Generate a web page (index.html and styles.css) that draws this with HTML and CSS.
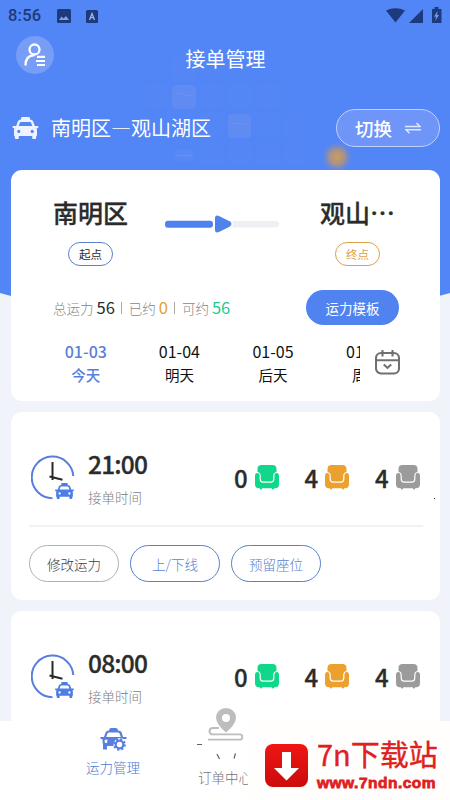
FILE: index.html
```html
<!DOCTYPE html>
<html lang="zh-CN">
<head>
<meta charset="utf-8">
<meta name="viewport" content="width=device-width, initial-scale=1">
<title>接单管理</title>
<link rel="stylesheet" href="styles.css">
</head>
<body>
<svg width="0" height="0" class="defs" aria-hidden="true">
  <symbol id="taxi" viewBox="0 0 26 22">
    <path fill-rule="evenodd" d="M8.500 2.600V1.200Q8.500 0 10 0h6q1.500 0 1.500 1.200v1.400q2.500.3 3.200 1.800L22.300 9H25q1 0 1 1t-1 1.200h-1l.5 1.800v5.500l-.8.7v1.800q0 1-1 1h-2q-1 0-1-1V19H6.300v2q0 1-1 1h-2q-1 0-1-1v-1.800l-.8-.7V13l.5-1.800H1q-1 0-1-1.200t1-1h2.700l1.600-4.600q.7-1.500 3.200-1.800zM6.200 9h13.600l-1.300-3.500q-.2-.6-1-.6H8.500q-.8 0-1 .6zM6.300 12.800a1.600 1.600 0 1 0 0 3.200 1.600 1.600 0 0 0 0-3.200zm13.400 0a1.600 1.600 0 1 0 0 3.200 1.600 1.600 0 0 0 0-3.200z"/>
  </symbol>
  <symbol id="seat" viewBox="0 0 24 25">
    <path d="M2.500 7V4Q2.500 0 6.500 0h11q4 0 4 4v3q-3.300.6-3.300 4.200v2.800q0 2.500-2.400 2.500H8.200q-2.400 0-2.400-2.500v-2.800Q5.800 7.600 2.500 7z"/>
    <path d="M0 11q0-3 2.300-3t2.300 3v3q0 3.700 3.600 3.700h7.600q3.600 0 3.600-3.700v-3q0-3 2.300-3T24 11v8q0 4.300-4 4.300h-.7q-.3 1.200-1.300 1.200t-1.200-1.200H7.200Q7 24.500 6 24.500t-1.300-1.200H4q-4 0-4-4.300z"/>
  </symbol>
  <symbol id="clock" viewBox="0 0 44 45">
    <path d="M21.500 43.200A20.800 20.800 0 1 1 42.300 21" fill="none" stroke="#587fdc" stroke-width="2"/>
    <path d="M21.500 7v18M18.500 21.500 31.500 24.800" fill="none" stroke="#292929" stroke-width="2"/>
    <svg x="24" y="28" width="19" height="16"><use href="#taxi" fill="#4c7ee5"/></svg>
  </symbol>
</svg>

<div class="screen">
  <main class="content">
    <header class="hero">
      <svg class="hero-art" viewBox="0 0 450 298" aria-hidden="true">
        <defs>
          <radialGradient id="glow"><stop offset="0" stop-color="#cf9c5b"/><stop offset=".45" stop-color="#b59476" stop-opacity=".85"/><stop offset="1" stop-color="#5385f7" stop-opacity="0"/></radialGradient>
        </defs>
        <path d="M0 0H450V293L439 296H11L0 293Z" fill="#5285f6"/>
        <g fill="#5a8af6" opacity=".3">
          <rect x="144" y="84" width="24" height="24" rx="4"/><rect x="200" y="84" width="24" height="24" rx="4"/><rect x="228" y="84" width="24" height="24" rx="4"/><rect x="256" y="84" width="24" height="24" rx="4"/>
          <rect x="172" y="55" width="24" height="26" rx="4"/><rect x="200" y="112" width="24" height="25" rx="4"/><rect x="256" y="112" width="22" height="25" rx="4"/><rect x="284" y="114" width="22" height="25" rx="4"/>
          <rect x="200" y="142" width="24" height="23" rx="4"/><rect x="228" y="142" width="24" height="23" rx="4"/><rect x="256" y="142" width="24" height="23" rx="4"/><rect x="284" y="142" width="22" height="23" rx="4"/>
        </g>
        <g fill="#688ff1" opacity=".6"><rect x="172" y="85" width="24" height="24" rx="4"/><rect x="228" y="114" width="23" height="24" rx="4"/><rect x="174" y="149" width="20" height="12" rx="4" opacity=".5"/></g>
        <g fill="none" stroke="#8c9ede" opacity=".5"><path d="M177 94l5-1 5 3 6-1M233 124l5-1 9 2M177 156l6-1 9 1"/></g>
        <circle cx="337" cy="157" r="17" fill="url(#glow)"/>
      </svg>
      <div class="status">
        <span class="time">8:56</span>
        <svg class="st-pic" viewBox="0 0 14 14"><rect width="14" height="14" rx="1.500" fill="#1c3a7c"/><path d="M2 11l2.500-3.500 2 2L9 7l3 4z" fill="#7ea0ee"/></svg>
        <svg class="st-a" viewBox="0 0 12 13"><rect width="12" height="13" rx="1.500" fill="#1c3a7c"/><path d="M3.500 10 6 3.500 8.500 10M4.500 7.700h3" fill="none" stroke="#9ab6f4" stroke-width="1.300"/></svg>
        <svg class="st-right" viewBox="0 0 58 17" fill="#1c3a7c"><path d="M2 3.500Q11.500-1 21 3.500L11.500 15.500zM25 16 39 2v14zM48 2h2.500V0h4v2H57.500v14H48z"/><path d="M53.500 4 50 9.800h2l-.7 4 3.800-5.800h-2z" fill="#7197ec"/></svg>
      </div>
      <div class="navbar">
        <span class="avatar"><svg viewBox="0 0 22 24" fill="none" stroke="#fff"><circle cx="10.500" cy="6.500" r="5" stroke-width="2.300"/><path d="M1.500 22.500Q1.500 12.500 10.500 12" stroke-width="2.300"/><path d="M13 13.800h8M12 18h9M13 22h8" stroke-width="2.200"/></svg></span>
        <h1>接单管理</h1>
      </div>
      <div class="route-bar">
        <svg class="route-taxi" fill="#eef3ff"><use href="#taxi"/></svg>
        <span class="route-name">南明区—观山湖区</span>
        <button class="switch">切换<svg viewBox="0 0 16 12" fill="none" stroke="#dfe8ff" stroke-width="1.500"><path d="M0 4.500h15L11.500 1M16 7.800H1L4.500 11.300"/></svg></button>
      </div>
    </header>

    <section class="card summary">
      <div class="stops">
        <div class="stop from"><strong>南明区</strong><span class="tag">起点</span></div>
        <svg class="track" viewBox="0 0 114 20"><rect y="6.800" width="48" height="7" rx="3" fill="#5082ed"/><path d="M50 4.300Q50 .5 54 2l10.500 5.300q4 2.700 0 5.400L54 18q-4 1.500-4-2.300z" fill="#5082ed"/><path d="M67 7h44q3 0 3 3.200t-3 3.200H67q2-3.200 0-6.400z" fill="#eff0f4"/></svg>
        <div class="stop to"><strong>观山<i>⋯</i></strong><span class="tag">终点</span></div>
      </div>
      <div class="capacity">
        <p>总运力 <b>56</b><i></i>已约 <b class="orange">0</b><i></i>可约 <b class="green">56</b></p>
        <button class="template">运力模板</button>
      </div>
      <div class="dates">
        <div class="date-strip">
          <div class="date active"><span>01-03</span><span>今天</span></div>
          <div class="date"><span>01-04</span><span>明天</span></div>
          <div class="date"><span>01-05</span><span>后天</span></div>
          <div class="date"><span>01-06</span><span>周六</span></div>
        </div>
        <svg class="calendar" viewBox="0 0 25 25" fill="none" stroke="#707070" stroke-width="2.100"><rect x="1" y="3" width="23" height="20.500" rx="5"/><path d="M1.500 10.200h22M7.500 0v6.500M17.500 0v6.500M8.800 14.500l3.700 3.400 3.700-3.400"/></svg>
      </div>
    </section>

    <section class="card slot">
      <div class="slot-head">
        <svg class="clock"><use href="#clock"/></svg>
        <div class="slot-time"><strong>21:00</strong><span>接单时间</span></div>
        <div class="seats">
          <span>0<svg class="s-green"><use href="#seat"/></svg></span>
          <span>4<svg class="s-orange"><use href="#seat"/></svg></span>
          <span>4<svg class="s-gray"><use href="#seat"/></svg></span>
        </div>
      </div>
      <div class="actions">
        <button class="plain">修改运力</button><button>上/下线</button><button>预留座位</button>
      </div>
      <i class="speck"></i>
    </section>

    <section class="card slot">
      <div class="slot-head">
        <svg class="clock"><use href="#clock"/></svg>
        <div class="slot-time"><strong>08:00</strong><span>接单时间</span></div>
        <div class="seats">
          <span>0<svg class="s-green"><use href="#seat"/></svg></span>
          <span>4<svg class="s-orange"><use href="#seat"/></svg></span>
          <span>4<svg class="s-gray"><use href="#seat"/></svg></span>
        </div>
      </div>
    </section>
  </main>

  <nav class="tabbar">
    <div class="tab current">
      <svg viewBox="0 0 26 23"><path d="M8.500 2.500Q8.500 0 10.500 0h5q2 0 2 2.500 3 .2 3.700 2L22.500 9H26v2h-3q-4-2.500-8 1-2.500 2.500-2 6H6.500v3.500h-4V17L1.800 11H0V9h3.500L5 4.500q.7-1.800 3.500-2zM5.700 9h14.600L19 5.500q-.3-1-1.500-1h-9q-1.200 0-1.500 1zM7 11.500 4 12l.5 3h2z" fill="#587fdc" fill-rule="evenodd"/><circle cx="19" cy="16.500" r="3.800" fill="#fff" stroke="#587fdc" stroke-width="2.200"/><circle cx="19" cy="16.500" r="5.400" fill="none" stroke="#587fdc" stroke-width="1.800" stroke-dasharray="2.120 2.120"/></svg>
      <span>运力管理</span>
    </div>
    <div class="tab orders">
      <svg viewBox="0 0 56 52"><path d="M24 20H18q-3.500 0-3.500 3.200t3.500 3.200h27q2.300 0 2.300 2.600t-2.300 2.600H13" fill="none" stroke="#bdbdbd" stroke-width="1.900"/><path d="M31 24.500Q21 16 21 9.500a10 9.500 0 0 1 20 0Q41 16 31 24.500z" fill="#bdbdbd"/><circle cx="31" cy="10" r="4" fill="#fff"/><path d="M2 36.500h5M22 46l2.500 5M39 50.500l1.500-5" stroke="#52676f" stroke-width="1.200" fill="none"/></svg>
      <span>订单中心</span>
    </div>
    <div class="brand">
      <svg viewBox="0 0 43 43"><defs><linearGradient id="red" x2="0" y2="1"><stop stop-color="#ef1614"/><stop offset="1" stop-color="#cb0b0b"/></linearGradient></defs><rect width="43" height="43" rx="8" fill="url(#red)"/><path d="M17 8h9v16h8L21.500 36.500 9 24h8z" fill="#fff"/></svg>
      <div><strong>7n下载站</strong><span>www.7ndn.com</span></div>
    </div>
  </nav>
</div>
</body>
</html>
```

FILE: styles.css
```css
* { box-sizing: border-box; }
body { margin: 0; font-family: "Noto Sans CJK SC", "Noto Sans", sans-serif; color: #2b2b2b; }
h1, p { margin: 0; font-weight: 400; }
i { font-style: normal; }
svg { display: block; flex: none; }
button { font: inherit; padding: 0; background: none; cursor: pointer; }
.defs { position: absolute; }
.screen { width: 450px; height: 800px; overflow: hidden; background: #f0f4fa; display: flex; flex-direction: column; }
.content { height: 721px; overflow: hidden; flex: none; }

.hero { height: 170px; position: relative; }
.hero-art { position: absolute; inset: 0 auto auto 0; width: 450px; height: 298px; }
.status, .navbar, .route-bar { position: relative; display: flex; align-items: center; color: #fff; }
.status { height: 32px; padding: 0 8px; color: #1c3a7c; }
.time { font: 500 16.500px/32px Roboto, sans-serif; width: 49px; letter-spacing: .2px; }
.st-pic { width: 14px; height: 14px; }
.st-a { width: 12px; height: 13px; margin-left: 15px; }
.st-right { width: 58px; height: 17px; margin-left: auto; margin-right: 0; margin-top: -2px; }
.navbar { height: 54px; align-items: flex-start; padding: 4px 16px 0; }
.avatar { width: 38px; height: 38px; border-radius: 50%; background: #779df7; display: grid; place-items: center; }
.avatar svg { width: 22px; height: 24px; }
h1 { font-size: 20px; line-height: 30px; margin: 8px 0 0 131.500px; }
.route-bar { height: 84px; padding: 0 10px 0 12px; }
.route-taxi { width: 27px; height: 22px; }
.route-name { font-size: 20px; line-height: 30px; margin-left: 12px; white-space: nowrap; }
.switch { margin-left: auto; width: 104px; height: 38px; border: 1px solid #bfd1fc; border-bottom-width: 1.500px; border-radius: 19px; background: #6e95f7; color: #fff; font-size: 18.500px; font-weight: 500; display: flex; align-items: center; justify-content: center; gap: 13px; }
.switch svg { width: 16px; height: 12px; }

.card { position: relative; width: 429px; margin: 0 0 11px 11px; background: #fff; border-radius: 11px; }
.summary { height: 231px; padding-top: 23px; }
.stops { display: flex; height: 97px; padding: 0 42px; }
.stop { display: flex; flex-direction: column; width: 75px; flex: none; }
.stop strong { font-size: 25px; line-height: 38px; font-weight: 500; white-space: nowrap; display: flex; -webkit-text-stroke: .3px; }
.tag { align-self: center; width: 45px; height: 24px; border: 1px solid #5c80cf; border-radius: 13px; margin-top: 11px; font-size: 11.500px; line-height: 22px; text-align: center; }
.to { margin-left: 41px; }
.to .tag { border-color: #dda248; color: #dda248; }
.track { width: 114px; height: 20px; margin: 21px 0 0 37px; }
.capacity { display: flex; align-items: center; height: 35px; padding: 0 41px 0 42px; justify-content: space-between; }
.capacity p { display: flex; align-items: baseline; font-size: 13.500px; line-height: 24px; color: #858585; font-weight: 300; white-space: pre; padding-bottom: 1px; }
.capacity b { font-size: 16.500px; font-weight: 400; color: #2b2b2b; }
.capacity i { width: 1px; height: 12px; background: #a6a6a6; margin: 0 7px 0 6px; }
.capacity .orange { color: #e2a13b; }
.capacity .green { color: #1ecb8b; }
.template { width: 93px; height: 35px; border: 0; border-radius: 18px; background: #5082f0; color: #fff; font-size: 13.500px; }
.dates { display: flex; padding: 15px 0 0 28px; }
.date-strip { display: flex; width: 321px; overflow: hidden; }
.date { flex: 0 0 93.600px; display: flex; flex-direction: column; text-align: center; color: #111; font-size: 16px; line-height: 23px; }
.date span + span { font-size: 14.500px; }
.active { color: #587fdc; font-weight: 500; }
.calendar { width: 25px; height: 25px; margin: 10px 0 0 15px; }

.slot { height: 188px; padding: 36px 17px 0 18px; }
.slot-head { display: flex; height: 79px; border-bottom: 2px solid #f1f2f3; }
.clock { width: 44px; height: 45px; margin: 7px 0 0 2px; }
.slot-time { flex: none; width: 90px; margin-left: 13px; display: flex; flex-direction: column; }
.slot-time strong { font-size: 24.500px; line-height: 32px; font-weight: 500; letter-spacing: -.8px; -webkit-text-stroke: .3px; }
.slot-time span { font-size: 13.500px; line-height: 20px; color: #808080; font-weight: 300; margin-top: 7px; }
.seats { flex: none; margin-left: 56px; display: flex; }
.seats span { flex: none; width: 70.500px; display: flex; align-items: center; height: 60px; gap: 7px; font-size: 24px; font-weight: 500; line-height: 34px; -webkit-text-stroke: .3px; }
.seats svg { width: 24px; height: 25px; margin-top: -2px; -webkit-text-stroke: 0; }
.s-green { fill: #10d789; } .s-orange { fill: #eca02d; } .s-gray { fill: #9b9b9b; }
.actions { display: flex; gap: 11px; padding-top: 18px; }
.actions button { width: 90px; height: 37px; border: 1px solid #587fce; border-radius: 19px; color: #587fce; font-size: 13.500px; font-weight: 300; }
.actions .plain { border-color: #b0b0b0; color: #3e3e3e; }
.speck { position: absolute; left: 423px; top: 86px; width: 1px; height: 1px; background: #333; }

.tabbar { height: 79px; flex: none; background: #fff; display: flex; }
.tab { width: 112px; display: flex; flex-direction: column; align-items: center; font-size: 13.500px; line-height: 20px; font-weight: 300; }
.current { margin-left: 57px; padding-top: 7px; color: #4b7bd0; }
.current svg { width: 27px; height: 23px; margin-bottom: 6px; }
.orders { position: relative; color: #757575; width: 81px; align-items: flex-start; padding-left: 29px; }
.orders svg { width: 56px; height: 52px; margin: -13px 0 7px -3px; }
.orders span { width: 50px; overflow: hidden; white-space: nowrap; }
.brand { position: relative; background: #fffefd; width: 200px; padding: 23px 0 0 15px; display: flex; color: #df2020; }
.brand > svg { width: 43px; height: 43px; }
.brand div { margin: -8px 0 0 9px; display: flex; flex-direction: column; white-space: nowrap; }
.brand strong { font-size: 29px; font-weight: 400; line-height: 34px; -webkit-text-stroke: .4px; }
.brand span { font: 700 15.500px/20px "Liberation Sans", sans-serif; -webkit-text-stroke: .8px; letter-spacing: .5px; margin-top: 3px; }
```
